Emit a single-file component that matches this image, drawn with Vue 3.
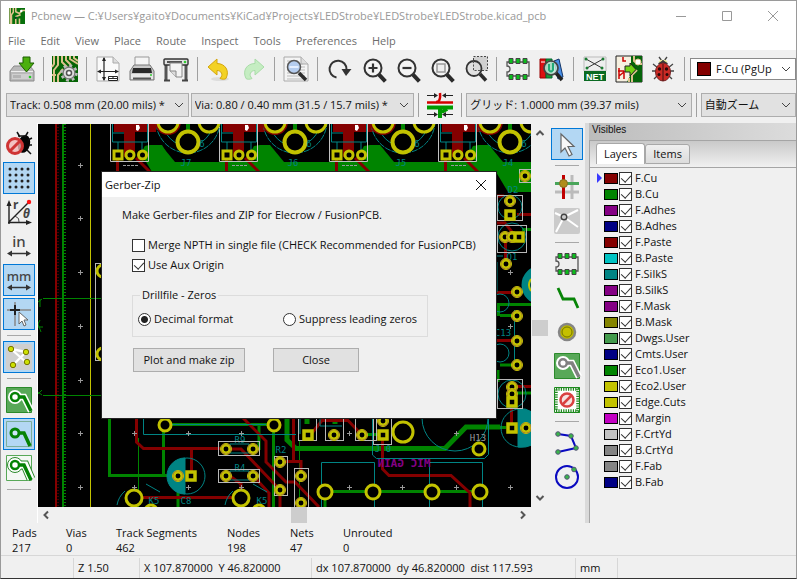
<script setup>
import { ref } from 'vue'

const menus = ['File', 'Edit', 'View', 'Place', 'Route', 'Inspect', 'Tools', 'Preferences', 'Help']

const magnifier = '<path d="M18.500 18l5.500 6" stroke="#2b2b2b" stroke-width="4" stroke-linecap="square"/><circle cx="13" cy="12" r="8.500" fill="#f4f4f4" stroke="#333" stroke-width="2"/>'
const footprint = '<path d="M2 6h22v14H2v-4a3 3 0 0 0 0-6z" fill="#eee" stroke="#555" stroke-width="1.300"/><g fill="#0bbd1c" stroke="#444"><path d="M4 2.500h4v5H4zM11 2.500h4v5h-4zM18 2.500h4v5h-4zM4 18.500h4v5H4zM11 18.500h4v5h-4zM18 18.500h4v5h-4z"/></g>'
const board = '<path d="M0 0h26v26H0z" fill="#056405"/><path d="M2 0v8l-2 3M6 0v9l-4 5v12M10 0v6l5 5v4M14 0v4l5 5M18 0v3l8 5M22 0v2l4 3M6 26v-7l5-6M0 19h4" fill="none" stroke="#dcc28c" stroke-width="2"/>'

const icons = {
  app: '<path d="M0 0h26v26H0z" fill="#07700b"/><path d="M2 0v26M7 0v7l-3 4v15M11 0v6l6 3 4-5h5M11 26V14l8-3M17 26v-9" fill="none" stroke="#e0c48e" stroke-width="2.500"/><circle cx="11" cy="16" r="2" fill="#042" /><circle cx="20" cy="5" r="2" fill="#fff"/>',
  save: '<path d="M1 15l4-5h16l4 5v10H1z" fill="#b9b9b9" stroke="#8a8a8a"/><path d="M2 15.500h22" stroke="#eee"/><path d="M3 18h20v5H3z" fill="#cfcfcf"/><path d="M5 19v3M7 19v3M9 19v3M11 19v3" stroke="#999"/><circle cx="21" cy="21" r="1.300" fill="#2c2"/><path d="M14 1h7v6h4l-7.500 9L10 7h4z" fill="#4caf0d" stroke="#1b5e00"/>',
  setup: board + '<circle cx="17" cy="17" r="6" fill="#ddd" stroke="#777" stroke-width="1.500"/><circle cx="17" cy="17" r="7.500" fill="none" stroke="#bbb" stroke-width="2.500" stroke-dasharray="2.900 3"/><circle cx="17" cy="17" r="2.500" fill="#fff" stroke="#555" stroke-width="1.500"/>',
  page: '<path d="M2 1h16l6 6v18H2z" fill="#fafafa" stroke="#aaa"/><path d="M18 1v6h6" fill="#ddd" stroke="#aaa"/><path d="M9 2v22M3 15.500h20" stroke="#222" stroke-width="1.200"/><path d="M9 1L7 5h4zM9 25l-2-4h4zM2 15.500l4-2v4zM24 15.500l-4-2v4z" fill="#222"/><path d="M13.500 20.500h9v4h-9zM13.500 22.500h9M18 20.500v2" fill="#fff" stroke="#222"/>',
  print: '<path d="M6 11V1h14v10" fill="#f5f5f5" stroke="#999"/><path d="M1 15l4-6h16l4 6v9H1z" fill="#c9c9c9" stroke="#777"/><path d="M4 12h18l1 5H3z" fill="#292929"/><path d="M2 18h22v5H2z" fill="#e8e8e8"/><path d="M4 22.500h18" stroke="#555" stroke-width="2"/><circle cx="22" cy="19" r="1" fill="#3c3"/>',
  plot: '<path d="M3 8v17M23 8v17" stroke="#555" stroke-width="3"/><path d="M1 24.500h6M19 24.500h6" stroke="#444" stroke-width="2"/><rect x="1" y="3" width="24" height="6" rx="1" fill="#e2e2e2" stroke="#333" stroke-width="1.400"/><path d="M4 6h15" stroke="#222" stroke-width="1.500"/><path d="M7 7h12v14h-6l-6-6z" fill="#f4f4f4" stroke="#888"/><path d="M7 15h6v6" fill="#ddd" stroke="#888"/><circle cx="22" cy="6" r="1.300" fill="#3c3"/>',
  undo: '<ellipse cx="14" cy="23" rx="9" ry="2" fill="#ddd"/><path d="M2 11l9-8v4.500c8 0 13 7 9 15-1 1-4 1-6 0 4-4 1-8-3-8V19z" fill="#f3d224" stroke="#d4a60c"/>',
  redo: '<path d="M24 11l-9-8v4.500c-8 0-13 7-9 15 1 1 4 1 6 0-4-4-1-8 3-8V19z" fill="#c5edc2" stroke="#a9dca8"/>',
  find: '<path d="M1 1h17l7 7v17H1z" fill="#f4f4f4" stroke="#aaa"/><path d="M18 1v7h7" fill="#ddd" stroke="#aaa"/><path d="M4 5h11M4 8h16M4 11h18M4 14h18M4 17h18M4 20h18M4 23h18" stroke="#bbb"/><path d="M16 17l7 7" stroke="#2b2b2b" stroke-width="3.500"/><circle cx="11" cy="11" r="6.500" fill="#b5cdef" stroke="#555" stroke-width="1.500"/><path d="M6.500 11h9" stroke="#e5efff" stroke-width="2"/>',
  refresh: '<path d="M10.500 21.500a8.500 8.500 0 1 1 10-8" fill="none" stroke="#333" stroke-width="2"/><path d="M15.500 13h10l-5.500 7z" fill="#333"/>',
  zoomin: magnifier + '<path d="M13 7.500v9M8.500 12h9" stroke="#333" stroke-width="2.200"/>',
  zoomout: magnifier + '<path d="M8.500 12h9" stroke="#333" stroke-width="2.200"/>',
  zoomfit: magnifier + '<path d="M9 8h8v8H9z" fill="#eee" stroke="#999" stroke-width="1.500"/>',
  zoomsel: '<path d="M11.500.5h14v14h-14z" fill="#d0d0d0" stroke="#444" stroke-dasharray="2 1.500"/><path d="M18 18l6 6.500" stroke="#2b2b2b" stroke-width="3.500"/><circle cx="12" cy="12.500" r="7.500" fill="#ddd" fill-opacity=".8" stroke="#333" stroke-width="1.800"/><path d="M11.500 5v9.500H19" fill="none" stroke="#555" stroke-dasharray="2 1.500"/>',
  footprint,
  library: '<path d="M1 3h6v19H1z" fill="#d11" stroke="#900"/><path d="M7 3h6v19H7z" fill="#1a9c35" stroke="#063"/><path d="M15 5l5-2 4 18-5 2z" fill="#4a90e8" stroke="#136"/><path d="M2 6h4M8 6h4" stroke="#fff"/><path d="M17 17l6 7" stroke="#222" stroke-width="3.500"/><circle cx="12" cy="12" r="7" fill="#c4e8da" fill-opacity=".85" stroke="#444" stroke-width="1.700"/><path d="M10 8v6q2 3 4 0V7" fill="none" stroke="#2a7" stroke-width="2"/>',
  net: '<path d="M2 1h22v14H2z" fill="#eee" stroke="#bbb"/><path d="M4 3l16 9M21 3L5 12" stroke="#333"/><g fill="#1c7c33"><circle cx="4" cy="3" r="1.500"/><circle cx="21" cy="3" r="1.500"/><circle cx="5" cy="12" r="1.500"/><circle cx="20" cy="12" r="1.500"/></g><path d="M2 15h22v10H2z" fill="#0a6a22"/><text x="13" y="23.500" text-anchor="middle" font-family="Liberation Sans" font-weight="700" font-size="9" fill="#fff">NET</text>',
  update: '<path d="M0 0h26v26H0z" fill="#f6f0e0" stroke="#222"/><path d="M15 0h11v26H11l4-8z" fill="#06640a"/><path d="M18 0v5l4 3h4M16 26v-7l5-5M13 26v-4" fill="none" stroke="#dcc28c" stroke-width="2"/><circle cx="22" cy="6" r="3" fill="#fff" stroke="#dcc28c"/><path d="M7 1v4h3M2 15h6M3 12v11M3 20l5-4v7" fill="none" stroke="#c00" stroke-width="1.500"/><path d="M9 10h5V7l6 6.500-6 6.500v-4H9z" fill="#73d216" stroke="#222"/>',
  ladybug: '<path d="M3 8l5 4M23 8l-5 4M2 15h5M24 15h-5M4 23l4-4M22 23l-4-4M9 1l3 4M17 1l-3 4" stroke="#444" stroke-width="1.300"/><path d="M8 8q5-8 10 0z" fill="#3a3a3a"/><path d="M9 6l3-2M17 6l-3-2" stroke="#ee9" stroke-width="1.500"/><ellipse cx="13" cy="16" rx="7.500" ry="9" fill="#cc2a24" stroke="#722"/><path d="M13 8v17" stroke="#411"/><g fill="#2a0a0a"><circle cx="9.500" cy="13" r="1.700"/><circle cx="16.500" cy="13" r="1.700"/><circle cx="9" cy="18.500" r="1.500"/><circle cx="17" cy="18.500" r="1.500"/></g>',
  diffpair: '<path d="M0 10.500h26" stroke="#d40000" stroke-width="2.500"/><path d="M0 15.500h26" stroke="#009a00" stroke-width="4"/><path d="M9 10q5 0 4-9" fill="none" stroke="#d40000" stroke-width="2.500"/><path d="M13 16v10M12 20q4 0 8-3" fill="none" stroke="#009a00" stroke-width="4"/><path d="M0 3.500h9M17 3.500h9M0 22.500h9M17 22.500h9" stroke="#222"/><path d="M7 1l4 2.500L7 6zM19 1l-4 2.500L19 6zM7 20l4 2.500L7 25zM19 20l-4 2.500 4 2.500z" fill="#222"/>',
  drc: '<ellipse cx="18" cy="13" rx="6" ry="9" transform="rotate(15 18 13)" fill="#050505"/><path d="M11 1l3 5M22 1l-3 5M22 9l4-2M23 14h3M21 19l4 4M12 5h8" stroke="#111" stroke-width="1.500"/><circle cx="9" cy="15" r="7.500" fill="#f3b5b5" fill-opacity=".8" stroke="#cf3434" stroke-width="3"/><path d="M4 20L14 10" stroke="#cf3434" stroke-width="3"/>',
  grid: '<g fill="#222">' + [4, 10, 16, 22].map(y => [4, 10, 16, 22].map(x => `<circle cx="${x}" cy="${y}" r="1.500"/>`).join('')).join('') + '</g>',
  polar: '<path d="M3 25V5M2 23.500h21M3 23L22 4" fill="none" stroke="#222" stroke-width="1.400"/><path d="M3 1L.5 7h5zM26 23.500l-6-2.500v5z" fill="#222"/><path d="M9 17q5 2 4 6" fill="none" stroke="#444"/><circle cx="23" cy="3" r="2.200" fill="#f11"/><text x="7" y="10" font-family="Noto Sans" font-weight="700" font-size="12" fill="#444">r</text><text x="17" y="19" font-family="Noto Sans" font-style="italic" font-weight="700" font-size="12" fill="#444">θ</text>',
  inch: '<text x="13" y="14" text-anchor="middle" font-family="Noto Sans" font-weight="500" font-size="15" fill="#444">in</text><path d="M4 20.500h18" stroke="#333" stroke-width="1.500"/><path d="M1 20.500l5-3v6zM25 20.500l-5-3v6z" fill="#333"/>',
  mm: '<text x="13" y="14" text-anchor="middle" font-family="Noto Sans" font-weight="500" font-size="13" fill="#444">mm</text><path d="M4 20.500h18" stroke="#333" stroke-width="1.500"/><path d="M1 20.500l5-3v6zM25 20.500l-5-3v6z" fill="#333"/>',
  cross: '<path d="M1 9h24M9 1v24" stroke="#888" stroke-width="1.500"/><path d="M4 9h10M9 4v10" stroke="#222" stroke-width="2"/><path d="M13 11v12l3-3 2 5 2-1-2-5h4z" fill="#fff" stroke="#666"/>',
  ratsnest: '<rect width="26" height="26" rx="2" fill="#cfcfcf"/><path d="M5 5l16 14M7 21L20 8M5 5l15 3" stroke="#fff" stroke-width="2.300"/><g fill="#cde000" stroke="#777300"><circle cx="5" cy="5" r="2.700"/><circle cx="20" cy="8" r="2.700"/><circle cx="7" cy="21" r="2.700"/><circle cx="21" cy="18" r="2.700"/></g>',
  zoneFill: '<path d="M.5.5h25v25H.5z" fill="#58a858" stroke="#2b8a2b"/><path d="M9 10h9l7 14" fill="none" stroke="#fff" stroke-width="6.500"/><circle cx="9" cy="10" r="7" fill="#fff"/><path d="M9 10h9l7 14" fill="none" stroke="#058205" stroke-width="3.500"/><circle cx="9" cy="10" r="4" fill="#fff" stroke="#058205" stroke-width="2.500"/>',
  zoneNone: '<path d="M.5.5h25v25H.5z" fill="none" stroke="#7bae9a"/><path d="M9 12h9l6 13" fill="none" stroke="#058205" stroke-width="3.500"/><circle cx="9" cy="12" r="4" fill="#cfe6fa" stroke="#058205" stroke-width="3"/>',
  zoneOutline: '<path d="M.5.5h25v25H.5z" fill="#f4f8f4" stroke="#58a858"/><path d="M9 10h10l6 14" fill="none" stroke="#2b8a2b" stroke-width="9"/><circle cx="9" cy="10" r="7.500" fill="#fff" stroke="#2b8a2b"/><path d="M9 10h10l6 14" fill="none" stroke="#fff" stroke-width="7"/><path d="M9 10h9l7 15" fill="none" stroke="#058205" stroke-width="3.500"/><circle cx="9" cy="10" r="4" fill="#fff" stroke="#058205" stroke-width="2.500"/>',
  pointer: '<path d="M7 3v18l4-4 4 8 3-1.500-4-8h6z" fill="#f8f8f8" stroke="#666" stroke-width="1.200"/>',
  highlight: '<path d="M18 1v24M1 18h24" stroke="#bbb" stroke-width="3"/><path d="M1 9.500h24" stroke="#49a55a" stroke-width="3"/><path d="M9.500 1v24" stroke="#c00000" stroke-width="3"/><circle cx="9.500" cy="9.500" r="4" fill="#b08e1c" stroke="#857024"/>',
  localrats: '<rect width="26" height="26" rx="2" fill="#cbcbcb"/><path d="M10 9L1 5M10 9L2 24M10 9l14-7M10 9l14 10" stroke="#fff" stroke-width="2"/><circle cx="10" cy="9" r="2.800" fill="#ccc" stroke="#444" stroke-width="1.400"/>',
  track: '<path d="M4 3l5 11h11l4 9" fill="none" stroke="#078407" stroke-width="2.800"/>',
  via: '<circle cx="13" cy="13" r="8" fill="#bcb900" stroke="#858585" stroke-width="2.500"/><circle cx="13" cy="13" r="5" fill="#c5c000" stroke="#777500"/>',
  zone: '<path d="M.5.5h25v25H.5z" fill="#58a858" stroke="#2b8a2b"/><path d="M9 10h9l7 14" fill="none" stroke="#fff" stroke-width="6.500"/><circle cx="9" cy="10" r="7" fill="#fff"/><path d="M9 10h9l7 14" fill="none" stroke="#808080" stroke-width="3.500"/><circle cx="9" cy="10" r="3.800" fill="#fff" stroke="#808080" stroke-width="2.500"/>',
  keepout: '<path d="M2 2h22v22H2z" fill="#fff" stroke="#1d8a1d" stroke-width="3.500" stroke-dasharray="1.200 1.200"/><path d="M.5.5h25v25H.5z" fill="none" stroke="#1d8a1d"/><circle cx="13" cy="13" r="6.500" fill="#f5e3e3" stroke="#d94141" stroke-width="2.500"/><path d="M8.500 17.500l9-9" stroke="#d94141" stroke-width="2.500"/>',
  polyline: '<path d="M4 4l13 2 5 12-18 4" fill="none" stroke="#0a0ac0" stroke-width="2"/><g fill="#39b54a" stroke="#557"><circle cx="4" cy="4" r="2.300"/><circle cx="17" cy="6" r="2.300"/><circle cx="22" cy="18" r="2.300"/><circle cx="4" cy="22" r="2.300"/></g>',
  circle: '<circle cx="13" cy="13" r="11" fill="none" stroke="#0a0ac0" stroke-width="2"/><g fill="#39b54a" stroke="#557"><circle cx="13" cy="13" r="2.300"/><circle cx="20" cy="5.500" r="2.300"/></g>',
}

const topTools = [
  { i: 'save', t: 'Save board' }, null,
  { i: 'setup', t: 'Board setup' }, null,
  { i: 'page', t: 'Page settings' }, { i: 'print', t: 'Print' }, { i: 'plot', t: 'Plot' }, null,
  { i: 'undo', t: 'Undo' }, { i: 'redo', t: 'Redo' }, null,
  { i: 'find', t: 'Find' }, null,
  { i: 'refresh', t: 'Refresh' }, { i: 'zoomin', t: 'Zoom in' }, { i: 'zoomout', t: 'Zoom out' }, { i: 'zoomfit', t: 'Zoom to fit' }, { i: 'zoomsel', t: 'Zoom to selection' }, null,
  { i: 'footprint', t: 'Footprint editor' }, { i: 'library', t: 'Footprint viewer' }, null,
  { i: 'net', t: 'Load netlist' }, { i: 'update', t: 'Update board' }, { i: 'ladybug', t: 'Design rules check' }, null,
]
const leftTools = [
  { i: 'drc', t: 'Disable DRC' }, { i: 'grid', t: 'Show grid', on: true }, { i: 'polar', t: 'Polar coordinates' },
  { i: 'inch', t: 'Inches' }, { i: 'mm', t: 'Millimetres', on: true }, { i: 'cross', t: 'Cursor shape', on: true }, null,
  { i: 'ratsnest', t: 'Show ratsnest', on: true }, null,
  { i: 'zoneFill', t: 'Show filled zones' }, { i: 'zoneNone', t: 'Hide zone fills', on: true }, { i: 'zoneOutline', t: 'Show zone outlines' }, null,
]
const rightTools = [
  { i: 'pointer', t: 'Select', on: true }, null,
  { i: 'highlight', t: 'Highlight net' }, { i: 'localrats', t: 'Local ratsnest' }, null,
  { i: 'footprint', t: 'Add footprint' }, { i: 'track', t: 'Route track' }, { i: 'via', t: 'Add via' },
  { i: 'zone', t: 'Add zone' }, { i: 'keepout', t: 'Add keepout' }, null,
  { i: 'polyline', t: 'Draw line' }, { i: 'circle', t: 'Draw circle' },
]

const layers = ref([
  ['F.Cu', '#840000'], ['B.Cu', '#008400'], ['F.Adhes', '#840084'], ['B.Adhes', '#000084'],
  ['F.Paste', '#840000'], ['B.Paste', '#00c2c2'], ['F.SilkS', '#008484'], ['B.SilkS', '#840084'],
  ['F.Mask', '#840084'], ['B.Mask', '#848400'], ['Dwgs.User', '#429a4c'], ['Cmts.User', '#000084'],
  ['Eco1.User', '#008400'], ['Eco2.User', '#c2c200'], ['Edge.Cuts', '#c2c200'], ['Margin', '#c200c2'],
  ['F.CrtYd', '#c2c2c2'], ['B.CrtYd', '#848484'], ['F.Fab', '#848484'], ['B.Fab', '#000084'],
].map(([name, color]) => ({ name, color, on: true })))

const stats = [['Pads', '217'], ['Vias', '0'], ['Track Segments', '462'], ['Nodes', '198'], ['Nets', '47'], ['Unrouted', '0']]

const merge = ref(false)
const aux = ref(true)
const zeros = ref('decimal')

const connectors = [0, 109, 219, 328]
const jacks = [[188, 'J7'], [295, 'J6'], [403, 'J5'], [510, 'J4']]
const crosses = [
  ...[165, 218, 272, 326, 380, 433, 487].map(y => [80, y]),
  ...[134, 188, 241, 349, 456].flatMap(x => [[x, 433], [x, 487]]),
  [402, 487], [510, 272], [510, 326], [510, 487],
]
const pads = [
  [525, 176], [510, 201], [505, 237], [512, 237], [506, 264], [517, 292], [517, 316], [517, 341], [517, 365],
  [512, 387], [512, 394], [526, 428], [226, 449], [253, 449], [178, 476], [226, 476], [253, 476],
  [280, 462], [280, 490], [301, 476], [301, 503], [334, 435], [362, 435], [383, 421],
]
const squares = [[510, 215], [519, 237], [512, 402], [512, 428], [191, 476], [308, 435], [383, 435]]
const bigPads = [
  [165, 425, 6], [274, 425, 6], [134, 498, 8], [241, 498, 8], [151, 511, 6], [259, 511, 6], [403, 432, 10],
  [479, 449, 6], [325, 492, 7], [373, 492, 7], [432, 492, 7], [480, 492, 7], [103, 271, 6], [103, 354, 6],
]
const frames = [
  [519, 169, 14, 13], [497, 195, 25, 25], [497, 225, 29, 27], [497, 379, 25, 29], [218, 441, 41, 14], [218, 469, 41, 13],
  [274, 456, 13, 39], [294, 468, 14, 42], [298, 410, 18, 30], [325, 410, 18, 30], [355, 410, 21, 30], [373, 410, 18, 34], [95, 263, 14, 97],
]
</script>

<template>
  <div class="win">
    <header class="titlebar">
      <svg class="appicon" viewBox="0 0 26 26" v-html="icons.app"></svg>
      <span class="caption">Pcbnew — C:¥Users¥gaito¥Documents¥KiCad¥Projects¥LEDStrobe¥LEDStrobe¥LEDStrobe.kicad_pcb</span>
      <button class="sysbtn" aria-label="Minimize"><svg viewBox="0 0 12 12"><path d="M1 6.500h10" /></svg></button>
      <button class="sysbtn" aria-label="Maximize"><svg viewBox="0 0 12 12"><path d="M1.500 1.500h9v9h-9z" /></svg></button>
      <button class="sysbtn" aria-label="Close window"><svg viewBox="0 0 12 12"><path d="M1 1l10 10M11 1L1 11" /></svg></button>
    </header>
    <nav class="menubar"><button v-for="m in menus" :key="m">{{ m }}</button></nav>

    <div class="tools">
      <template v-for="(b, n) in topTools" :key="n">
        <button v-if="b" class="tool" :aria-label="b.t"><svg viewBox="0 0 26 26" v-html="icons[b.i]"></svg></button>
        <span v-else class="sep"></span>
      </template>
      <div class="combo layer">
        <i class="chip"></i>
        <select aria-label="Active layer"><option>F.Cu (PgUp</option></select>
        <svg class="chev" viewBox="0 0 10 6"><path d="M1 1l4 4 4-4" /></svg>
      </div>
    </div>

    <div class="tools second">
      <div class="combo track">
        <select aria-label="Track width"><option>Track: 0.508 mm (20.00 mils) *</option></select>
        <svg class="chev" viewBox="0 0 10 6"><path d="M1 1l4 4 4-4" /></svg>
      </div>
      <div class="combo via">
        <select aria-label="Via size"><option>Via: 0.80 / 0.40 mm (31.5 / 15.7 mils) *</option></select>
        <svg class="chev" viewBox="0 0 10 6"><path d="M1 1l4 4 4-4" /></svg>
      </div>
      <span class="sep"></span>
      <button class="tool" aria-label="Automatic track width"><svg viewBox="0 0 26 26" v-html="icons.diffpair"></svg></button>
      <span class="sep"></span>
      <div class="combo gridsel">
        <select aria-label="Grid"><option>グリッド: 1.0000 mm (39.37 mils)</option></select>
        <svg class="chev" viewBox="0 0 10 6"><path d="M1 1l4 4 4-4" /></svg>
      </div>
      <span class="sep"></span>
      <div class="combo zoomsel">
        <select aria-label="Zoom"><option>自動ズーム</option></select>
        <svg class="chev" viewBox="0 0 10 6"><path d="M1 1l4 4 4-4" /></svg>
      </div>
    </div>

    <main class="work">
      <div class="side">
        <template v-for="(b, n) in leftTools" :key="n">
          <button v-if="b" class="tool" :class="{ on: b.on }" :aria-label="b.t"><svg viewBox="0 0 26 26" v-html="icons[b.i]"></svg></button>
          <span v-else class="hsep"></span>
        </template>
      </div>

      <div class="view">
        <div class="canvas">
          <svg class="pcb" viewBox="38 124 493 383" preserveAspectRatio="xMinYMin slice">
            <!-- copper pour -->
            <path fill="#008400" d="M142 155l3-9 6-1h11l10 17h360v30h-24l-12-20H152z" />
            <g v-for="x in connectors" :key="'z' + x" :transform="`translate(${x} 0)`">
              <path fill="#008400" d="M140 155l5-9 6-1h10l14 17h-26z" />
            </g>
            <!-- board edges -->
            <g fill="none">
              <path d="M56 124v383" stroke="#840000" stroke-width="2" />
              <path d="M58 124v383" stroke="#840000" stroke-dasharray="1 2" />
              <path d="M63 124v383" stroke="#008400" stroke-width="2" />
              <path d="M65 124v383" stroke="#008400" stroke-width="2" stroke-dasharray="1 2" />
              <path d="M90.500 124v383" stroke="#c2c200" />
              <path d="M43 298.500h62M43 395.500h62M42 299l-4 3M40 299v8M38 327h5M40 320l-2 4 3 8M42 395l-4-3M42 390l-4 4" stroke="#008400" />
            </g>
            <!-- back copper -->
            <g fill="none" stroke="#008400" stroke-width="3">
              <path d="M109.500 418v57.500H172M163.500 430v45M170 424.500h98M273.500 432v75M259 426v24M178 492v15M325 498v10M330 491.500h150M366 434.500h14M490 304.500h41M498.500 304v12M522 229.500h10M500 315.500h14M500 365h14M498 370v12M490 427.500h16M515 393h17" />
              <path stroke-width="5" d="M287 418v22l9 8.500h149l21-21.500h34M307 410v14M335 410v14" />
              <path stroke-width="1" d="M138.500 438v69M299.500 440v67" />
            </g>
            <!-- front copper -->
            <g v-for="x in connectors" :key="'c' + x" :transform="`translate(${x} 0)`">
              <path fill="#840000" d="M114 124h42v8h-21v25h-11v-25h-10z" />
              <path fill="none" stroke="#008484" d="M112.500 124v18h35v-18M118 142v8M142 142v8M124 133h-11" />
              <path fill="none" stroke="#840000" stroke-width="3" d="M117.500 158v16M136 158l16 16" />
              <path fill="none" stroke="#c2c2c2" d="M110.500 124v37.500h38V124" />
              <path stroke="#999" stroke-dasharray="3 1" d="M123 165.500h15" />
              <path fill="#fff" d="M136 125h3l1 3-2 3-2-1z" />
              <path fill="#000" stroke="#c2c200" stroke-width="3" d="M114 151h8v8h-8z" />
              <g fill="#000" stroke="#c2c200"><circle cx="130" cy="155" r="4" stroke-width="3" /><circle cx="142.500" cy="155" r="4" stroke-width="3" /></g>
            </g>
            <g fill="none" stroke="#840000" stroke-width="3">
              <path d="M136.500 418v24l7 6.500h77M191.500 448v24M243 418l23 23v21l20 20h9l24 25M230 449h11l39 41M230 476l11 8v10M257 480l12 13v14M143 497.500h90M280 495v12M286 461.500h15v12M293.500 418v43M312 433l10-12.500h26l12 12.500M382.500 440v29l6.500 6.500h62l19 17.500v14" />
              <path d="M496 196h8M517 214.500h15M496 223h9l7 9v6M498 237h8M505.500 241v20M496 292.500h16M496 340.500h16M517 386.500h15M511.500 405v20" />
            </g>
            <!-- silkscreen -->
            <g fill="none" stroke="#008484">
              <path d="M143.500 418v16.500H296M172 424.500h94M372.500 418v37l4 3.500h108l4-4V418M321.500 507v-44.500h53V507M429.500 507v-44.500h53V507M230 444h19v9h-19zM230 471h19v9h-19zM300 418v16M320 418v8h22" />
              <circle cx="455" cy="418" r="33" />
              <circle cx="187" cy="476" r="18" />
              <path d="M185 458v36a18 18 0 0 1 0-36z" fill="#008484" />
              <circle cx="510" cy="207" r="12" /><circle cx="512" cy="237" r="14" /><circle cx="500" cy="303" r="9" />
              <circle cx="500" cy="353" r="9" /><circle cx="512" cy="394" r="14" /><circle cx="520" cy="428" r="19" />
              <path d="M518 409a19 19 0 0 1 14 3v33q-6 3-14 2z" fill="#008484" />
              <circle cx="541" cy="285" r="15" stroke-width="9" />
              <path d="M497 262v30M514.500 310v60M497 256h6M117 505a24 24 0 0 1 8-14M225 505a24 24 0 0 1 8-14M146 484l14 8M253 484l14 8" />
            </g>
            <path d="M531 279q-4 6 0 12" fill="none" stroke="#c2c200" stroke-width="2" />
            <g v-for="[x, name] in jacks" :key="name">
              <g fill="none" stroke="#008484"><circle :cx="x" cy="121" r="32" stroke-dasharray="6 1" /><circle :cx="x" cy="121" r="25" /></g>
              <path :d="`M${x} 124v9`" stroke="#008400" stroke-width="4" />
              <g fill="#000" stroke="#c2c200" stroke-width="3">
                <circle :cx="x - 20" cy="122" r="10" stroke="#840000" stroke-width="6" /><circle :cx="x + 21" cy="122" r="10" />
                <circle :cx="x - 20" cy="122" r="10" /><circle :cx="x" cy="142" r="10.500" stroke-width="4" />
              </g>
              <text class="silk" :x="x - 2" y="166">{{ name }}</text>
              <text class="silk" :x="x + 14" y="147">6</text>
            </g>
            <text class="silk" x="240" y="443">R9</text>
            <text class="silk" x="240" y="471">R4</text>
            <text class="silk" x="281" y="453">R2</text>
            <text class="silk" x="186" y="504">C8</text>
            <text class="silk" x="154" y="504">K5</text>
            <text class="silk" x="262" y="504">K5</text>
            <text class="silk" x="383" y="452">J 0</text>
            <text class="silk" x="513" y="193">D2</text>
            <text class="silk" x="512" y="260">Q1</text>
            <text class="silk" x="503" y="336">C13</text>
            <text class="silk pale" x="478" y="441">H13</text>
            <text class="mirror" transform="translate(404 467) scale(-1 1)">MIC GAIN</text>
            <!-- outlines and pads -->
            <rect v-for="(f, n) in frames" :key="'f' + n" :x="f[0] + 0.5" :y="f[1] + 0.5" :width="f[2]" :height="f[3]" fill="none" stroke="#b8b8b8" />
            <g v-for="(p, n) in pads" :key="'p' + n" fill="#000" stroke="#c2c200">
              <circle :cx="p[0]" :cy="p[1]" r="5.500" fill="#840084" /><circle :cx="p[0]" :cy="p[1]" r="3.700" stroke-width="2.500" />
            </g>
            <rect v-for="(s, n) in squares" :key="'s' + n" :x="s[0] - 4" :y="s[1] - 4" width="8" height="8" fill="#000" stroke="#c2c200" stroke-width="3.500" />
            <circle v-for="(p, n) in bigPads" :key="'b' + n" :cx="p[0]" :cy="p[1]" :r="p[2]" fill="#000" stroke="#c2c200" stroke-width="3" />
            <path v-for="(c, n) in crosses" :key="'x' + n" :d="`M${c[0] - 2} ${c[1] + 0.5}h5M${c[0] + 0.5} ${c[1] - 2}v5`" stroke="#999" />
          </svg>
        </div>
        <div class="vbar">
          <svg viewBox="0 0 10 6"><path d="M1.500 5L5 1.500 8.500 5" /></svg>
          <i></i>
          <svg viewBox="0 0 10 6"><path d="M1.500 1L5 4.500 8.500 1" /></svg>
        </div>
        <div class="hbar">
          <svg viewBox="0 0 6 10"><path d="M5 1.500L1.500 5 5 8.500" /></svg>
          <i></i>
          <svg viewBox="0 0 6 10"><path d="M1 1.500L4.500 5 1 8.500" /></svg>
        </div>
      </div>

      <div class="side">
        <template v-for="(b, n) in rightTools" :key="n">
          <button v-if="b" class="tool" :class="{ on: b.on }" :aria-label="b.t"><svg viewBox="0 0 26 26" v-html="icons[b.i]"></svg></button>
          <span v-else class="hsep"></span>
        </template>
      </div>

      <aside class="panel">
        <h2>Visibles</h2>
        <div class="tabs"><button class="tab active">Layers</button><button class="tab">Items</button></div>
        <ul class="layers">
          <li v-for="(l, n) in layers" :key="l.name">
            <span class="mark"><i v-if="n === 0"></i></span>
            <span class="swatch" :style="{ background: l.color }"></span>
            <label><input v-model="l.on" type="checkbox" class="check" />{{ l.name }}</label>
          </li>
        </ul>
      </aside>
    </main>

    <dl class="stats">
      <div v-for="s in stats" :key="s[0]"><dt>{{ s[0] }}</dt><dd>{{ s[1] }}</dd></div>
    </dl>
    <footer class="status">
      <span></span><span>Z 1.50</span><span>X 107.870000&nbsp; Y 46.820000</span>
      <span>dx 107.870000&nbsp; dy 46.820000&nbsp; dist 117.593</span><span>mm</span><span></span>
    </footer>

    <section class="dialog" role="dialog" aria-labelledby="dlg">
      <header><h1 id="dlg">Gerber-Zip</h1><button aria-label="Close dialog"><svg viewBox="0 0 12 12"><path d="M1 1l10 10M11 1L1 11" /></svg></button></header>
      <div class="body">
        <p>Make Gerber-files and ZIP for Elecrow / FusionPCB.</p>
        <div class="form">
          <label><input v-model="merge" type="checkbox" class="check" />Merge NPTH in single file (CHECK Recommended for FusionPCB)</label>
          <label><input v-model="aux" type="checkbox" class="check" />Use Aux Origin</label>
          <fieldset>
            <legend>Drillfile - Zeros</legend>
            <label><input v-model="zeros" type="radio" name="zeros" value="decimal" />Decimal format</label>
            <label><input v-model="zeros" type="radio" name="zeros" value="suppress" />Suppress leading zeros</label>
          </fieldset>
          <div class="actions"><button class="plotbtn">Plot and make zip</button><button class="closebtn">Close</button></div>
        </div>
      </div>
    </section>
  </div>
</template>

<style>
body { background: #f0f0f0; }
</style>

<style scoped>
* { box-sizing: border-box; }
.win {
  position: relative;
  display: flex;
  flex-direction: column;
  min-height: 100vh;
  border: 1px solid #9a9a9a;
  border-bottom-color: #333;
  background: #f0f0f0;
  color: #111;
  font: 11px/16px "Open Sans", "Noto Sans CJK JP", sans-serif;
}
button { border: 0; padding: 0; background: none; font: inherit; color: inherit; }
.titlebar { display: flex; align-items: center; height: 29px; padding-left: 8px; background: #fff; color: #999; }
.appicon { width: 16px; height: 16px; margin-right: 6px; }
.caption { flex: 1; min-width: 0; white-space: nowrap; overflow: hidden; }
.sysbtn { width: 46px; height: 29px; display: grid; place-items: center; }
.sysbtn svg { width: 12px; height: 12px; fill: none; stroke: #999; }
.menubar { display: flex; gap: 15px; height: 20px; padding: 2px 7px 0; background: #fff; color: #6d6d6d; }
.menubar button { line-height: 16px; height: 18px; }

.tools { display: flex; align-items: center; height: 38px; padding: 0 0 0 4px; }
.tools.second { height: 34px; padding-left: 5px; }
.tool { flex: none; width: 34px; height: 34px; display: grid; place-items: center; }
.tool svg { width: 26px; height: 26px; overflow: visible; }
.sep { flex: none; width: 9px; height: 24px; display: flex; justify-content: center; }
.sep::before { content: ""; width: 1px; background: #a0a0a0; }
.combo { position: relative; display: flex; align-items: center; height: 24px; border: 1px solid #adadad; background: #e1e1e1; min-width: 0; }
.combo select { appearance: none; flex: 1; min-width: 0; height: 22px; border: 0; padding: 0 18px 0 3px; background: none; font: inherit; color: #111; }
.chev { position: absolute; right: 4px; width: 10px; height: 6px; fill: none; stroke: #444; pointer-events: none; }
.layer { flex: 1; margin-left: 1px; height: 22px; background: #fff; border-color: #8a8a8a; }
.layer select { height: 20px; }
.chip { flex: none; width: 14px; height: 14px; margin: 0 2px 0 6px; border: 1px solid #000; background: #840000; }
.track { flex: 182 1 0; margin-right: 2px; }
.via { flex: 223 1 0; }
.gridsel { flex: 225 1 0; }
.zoomsel { flex: 94 1 0; }

.work { flex: 1; display: flex; margin-top: 1px; }
.side { flex: none; width: 36px; padding-top: 4px; display: flex; flex-direction: column; align-items: center; }
.side .tool.on { width: 32px; height: 32px; margin: 1px 0; border: 1px solid #0078d7; background: #b3d7f3; }
.hsep { width: 24px; height: 9px; display: flex; align-items: center; }
.hsep::before { content: ""; flex: 1; height: 1px; background: #a8a8a8; }
.view { flex: 1; min-width: 0; display: grid; grid-template: 1fr 16px / 1fr 18px; padding-top: 1px; border-left: 1px solid #fff; }
.canvas { position: relative; background: #000; overflow: hidden; }
.pcb { position: absolute; inset: 0; width: 100%; height: 100%; }
.silk { fill: #008484; font: 9px "DejaVu Sans Mono", monospace; text-anchor: middle; }
.pale { fill: #999; }
.mirror { fill: #840084; font: bold 11px "DejaVu Sans Mono", monospace; text-anchor: middle; }
.vbar, .hbar { display: flex; justify-content: space-between; align-items: center; }
.vbar { flex-direction: column; padding: 6px 0; }
.hbar { padding: 0 5px; }
.vbar i, .hbar i { width: 16px; height: 16px; background: #cdcdcd; }
.vbar i { margin-top: 24px; }
.hbar i { margin-left: 28px; }
.vbar svg { width: 10px; height: 6px; }
.hbar svg { width: 6px; height: 10px; }
.vbar svg, .hbar svg { fill: none; stroke: #555; stroke-width: 2; }

.panel { flex: none; width: 211px; border-left: 4px solid #dadada; display: flex; flex-direction: column; }
.panel h2 { margin: 0; height: 17px; padding-left: 3px; font: 10px/14px "Liberation Sans", sans-serif; background: linear-gradient(90deg, #bcbcbc, #dcdcdc); }
.tabs { display: flex; align-items: flex-end; height: 28px; padding: 0 0 3px 6px; background: linear-gradient(#c9c9c9, #f0f0f0); border: 1px solid #a5a5a5; border-right: 0; }
.tab { height: 20px; padding: 0 7px; border: 1px solid #a8a8a8; border-radius: 3px 3px 0 0; background: linear-gradient(#efefef, #dcdcdc); }
.tab.active { height: 21px; background: #fff; border-bottom: 0; }
.layers { flex: 1; margin: 0; padding: 2px 0 0 7px; border-left: 1px solid #a5a5a5; list-style: none; }
.layers li { display: flex; align-items: center; height: 16px; }
.mark { width: 7px; }
.mark i { display: block; width: 0; border: 5px solid transparent; border-left-color: #3a3aff; border-right: 0; }
.swatch { width: 14px; height: 11px; margin-right: 1px; border: 1px solid #000; }
label { display: flex; align-items: center; gap: 3px; white-space: nowrap; }
.check { appearance: none; position: relative; flex: none; width: 13px; height: 13px; margin: 0; border: 1px solid #333; background: #fff; }
.check:checked::after { content: ""; position: absolute; left: 3px; top: 0; width: 5px; height: 8px; border: solid #333; border-width: 0 1px 1px 0; transform: rotate(42deg); }

.stats { display: grid; grid-template-columns: 54px 50px 111px 63px 53px 1fr; margin: 0; height: 32px; padding: 2px 0 0 11px; line-height: 15px; }
.stats dd { margin: 0; }
.status { display: grid; grid-template-columns: 72px 66px 172px 264px 42px 1fr; height: 23px; padding: 2px 0 1px; border-top: 1px solid #d7d7d7; line-height: 20px; }
.status span { padding-left: 4px; white-space: nowrap; }
.status span + span { border-left: 1px solid #d7d7d7; }

.dialog { position: absolute; left: 101px; top: 171px; width: 394px; height: 246px; background: #f0f0f0; box-shadow: 0 0 0 1px #222; }
.dialog header { display: flex; justify-content: space-between; align-items: center; height: 25px; padding: 0 9px 0 3px; background: #fff; }
.dialog h1 { margin: 0; font: inherit; }
.dialog header svg { display: block; width: 12px; height: 12px; fill: none; stroke: #111; }
.body { padding: 10px 0 0 20px; }
.body p { margin: 0 0 12px; }
.form { padding-left: 10px; }
.form > label { height: 20px; }
fieldset { display: flex; min-width: 0; width: 296px; height: 50px; margin: 12px 0 0; padding: 0 5px; border: 1px solid #dcdcdc; }
legend { padding: 0 2px; margin-left: 2px; }
fieldset label { flex: none; height: 32px; }
fieldset label:first-of-type { width: 145px; }
fieldset input { appearance: none; flex: none; width: 13px; height: 13px; margin: 0; border: 1px solid #333; border-radius: 50%; background: #fff; }
fieldset input:checked { background: radial-gradient(circle, #222 3px, #fff 4px); }
.actions { display: flex; gap: 28px; margin: 11px 0 0 1px; }
.actions button { height: 24px; border: 1px solid #adadad; background: #e1e1e1; }
.plotbtn { width: 112px; }
.closebtn { width: 86px; }
</style>
